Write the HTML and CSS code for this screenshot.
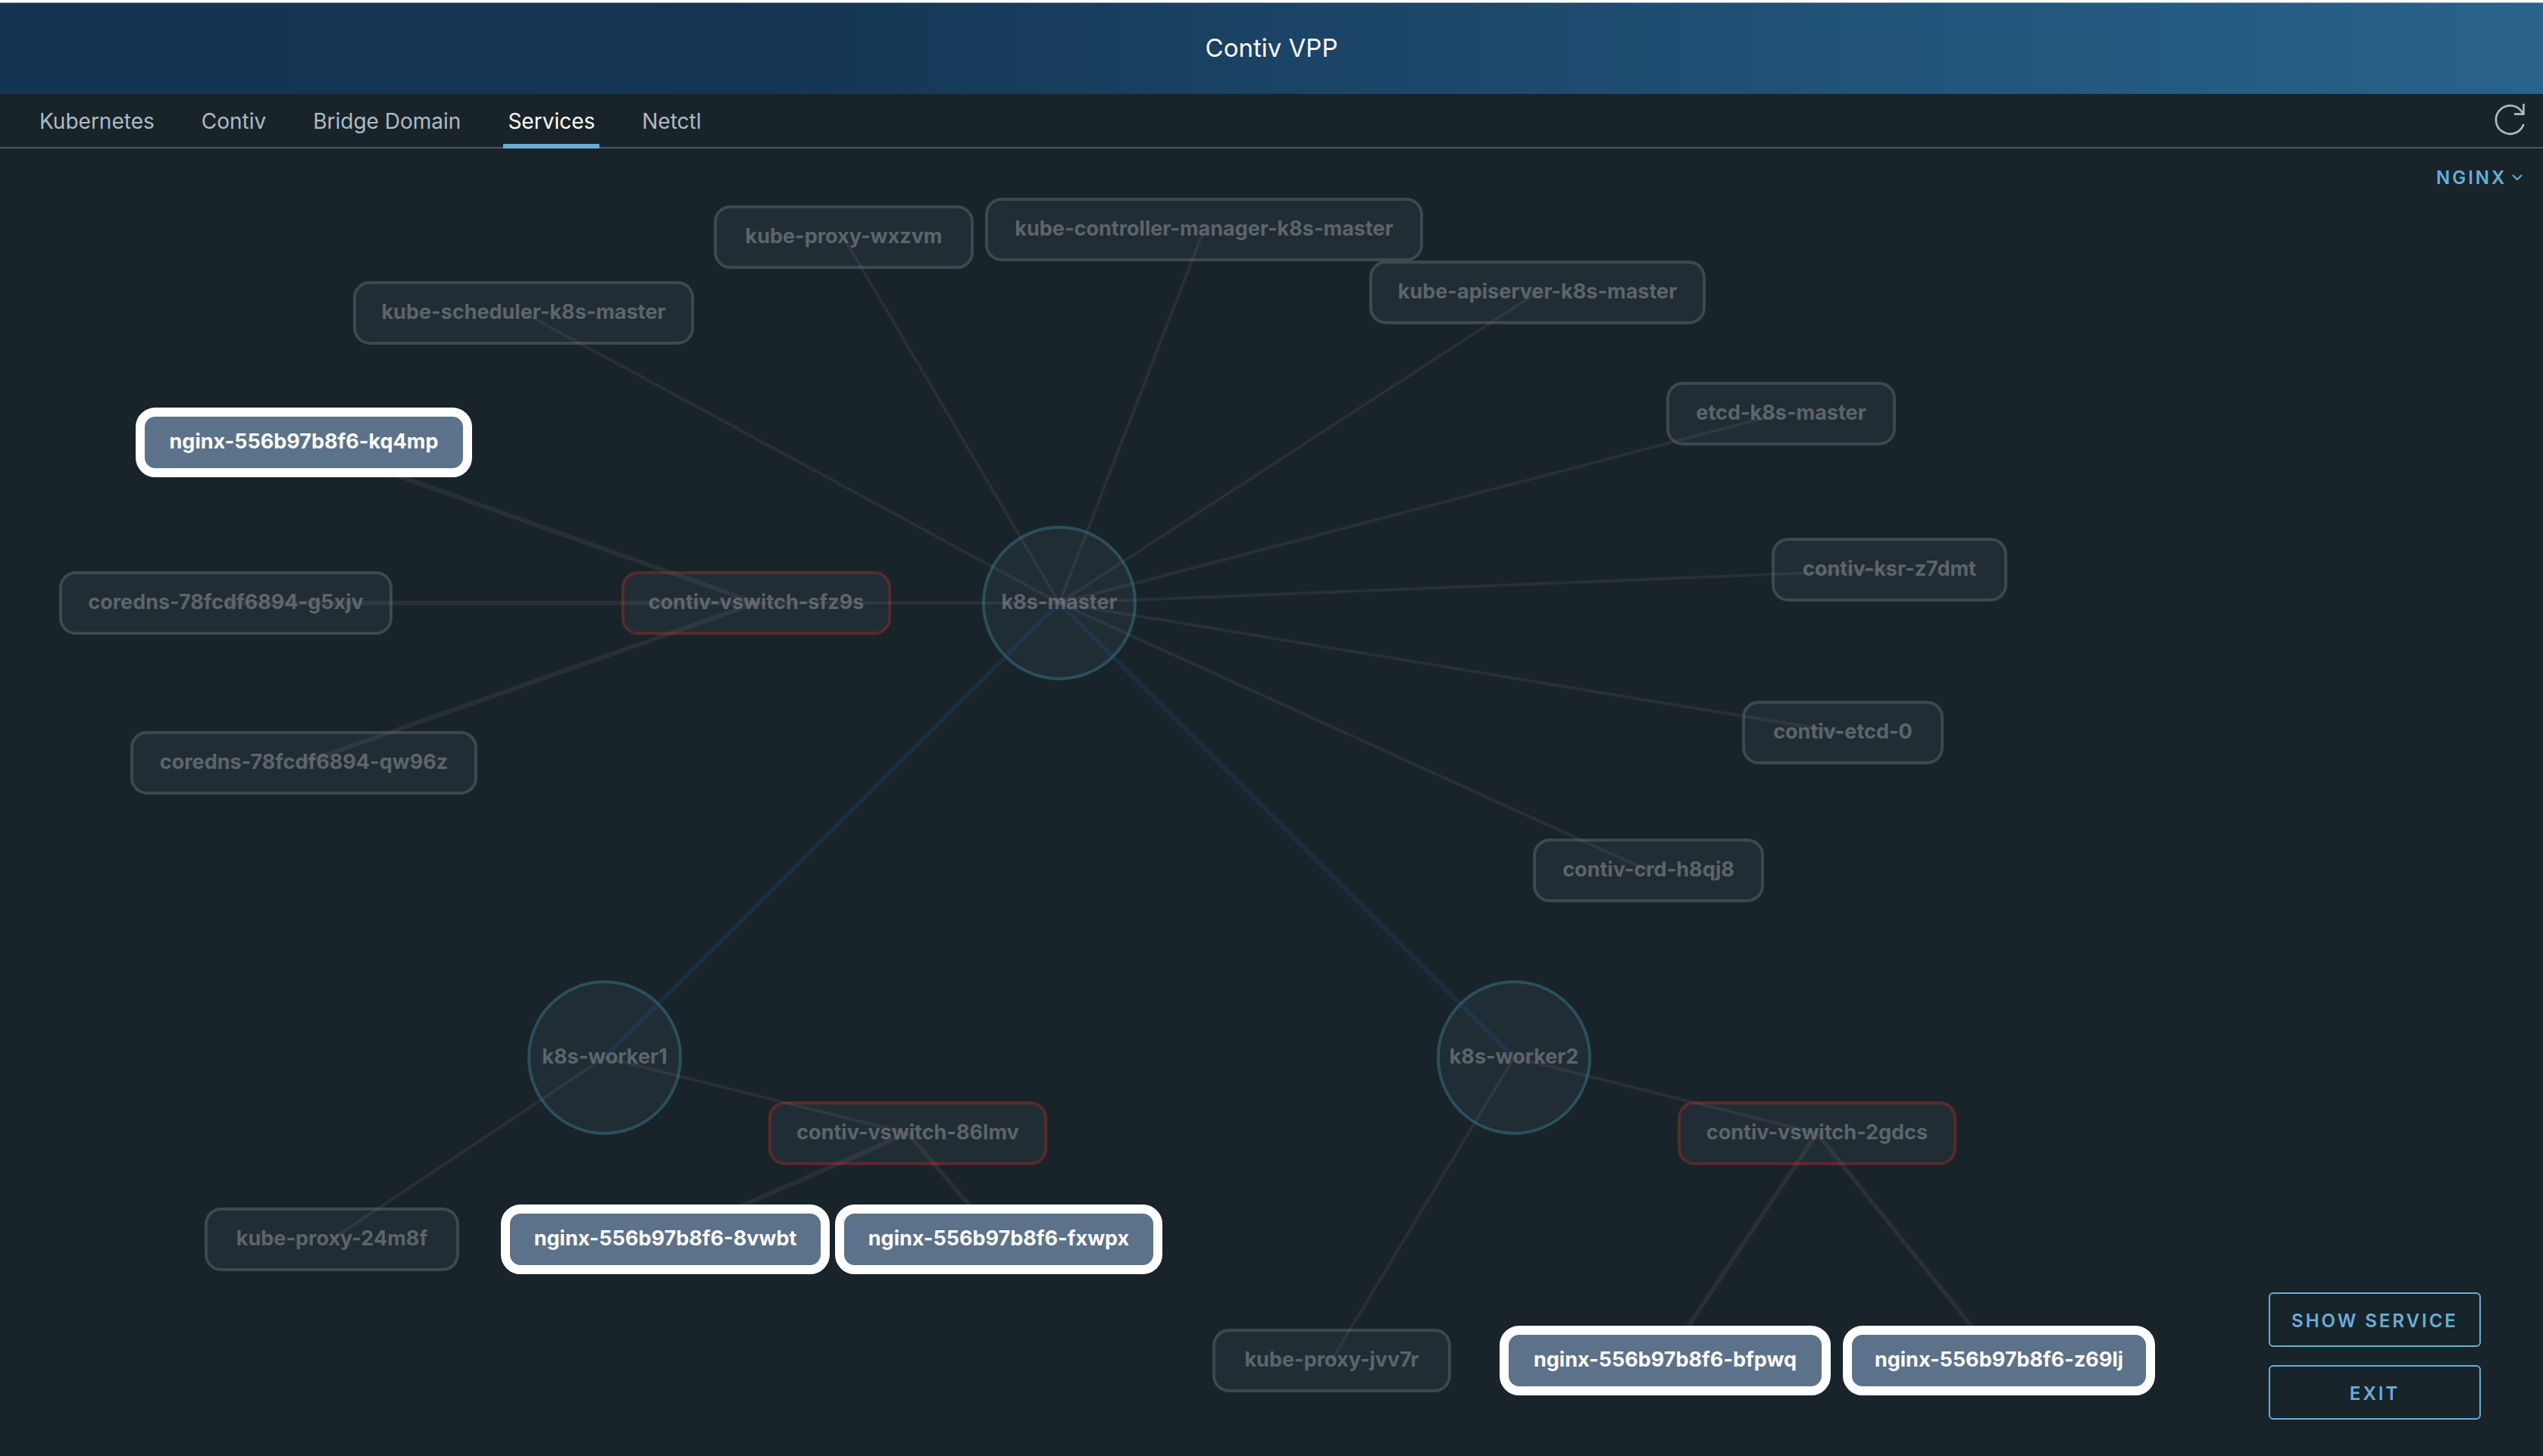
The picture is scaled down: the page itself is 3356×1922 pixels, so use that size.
FILE: index.html
```html
<!DOCTYPE html>
<html lang="en">
<head>
<meta charset="utf-8">
<title>Contiv VPP</title>
<link rel="stylesheet" href="styles.css">
</head>
<body>
<header class="app-header">
  <h1 class="app-title">Contiv VPP</h1>
</header>
<nav class="tabs">
  <a class="tab" href="#kubernetes">Kubernetes</a>
  <a class="tab" href="#contiv">Contiv</a>
  <a class="tab" href="#bridge-domain">Bridge Domain</a>
  <a class="tab active" href="#services" aria-current="page">Services</a>
  <a class="tab" href="#netctl">Netctl</a>
  <button class="refresh" type="button" aria-label="Refresh">
    <svg width="44" height="44" viewBox="0 0 44 44" fill="none" stroke="currentColor">
      <path d="M39.5 14A18.7 18.7 0 1 0 40 29" stroke-width="2.7" stroke-linecap="round"/>
      <path d="M40.4 1V14.6H28" stroke-width="2.6"/>
    </svg>
  </button>
</nav>
<main class="topology">
  <div class="node" style="left:942px;top:75px;width:343px">kube-proxy-wxzvm</div>
  <div class="node" style="left:1300px;top:65px;width:578px">kube-controller-manager-k8s-master</div>
  <div class="node" style="left:1807px;top:148px;width:444px">kube-apiserver-k8s-master</div>
  <div class="node" style="left:466px;top:175px;width:450px">kube-scheduler-k8s-master</div>
  <div class="node" style="left:2199px;top:308px;width:303px">etcd-k8s-master</div>
  <div class="node" style="left:2338px;top:514px;width:311px">contiv-ksr-z7dmt</div>
  <div class="node" style="left:2299px;top:729px;width:266px">contiv-etcd-0</div>
  <div class="node" style="left:2023px;top:911px;width:305px">contiv-crd-h8qj8</div>
  <div class="node" style="left:78px;top:558px;width:440px">coredns-78fcdf6894-g5xjv</div>
  <div class="node" style="left:172px;top:769px;width:458px">coredns-78fcdf6894-qw96z</div>
  <div class="node" style="left:270px;top:1398px;width:336px">kube-proxy-24m8f</div>
  <div class="node" style="left:1600px;top:1558px;width:315px">kube-proxy-jvv7r</div>
  <div class="node vswitch" style="left:820px;top:558px;width:356px">contiv-vswitch-sfz9s</div>
  <div class="node vswitch" style="left:1014px;top:1258px;width:368px">contiv-vswitch-86lmv</div>
  <div class="node vswitch" style="left:2214px;top:1258px;width:368px">contiv-vswitch-2gdcs</div>
  <div class="node host" style="left:1296px;top:498px">k8s-master</div>
  <div class="node host" style="left:696px;top:1098px">k8s-worker1</div>
  <div class="node host" style="left:1896px;top:1098px">k8s-worker2</div>

  <svg class="links" aria-hidden="true">
    <g class="link-host">
      <path d="M1398 600L798 1200"/>
      <path d="M1398 600L1998 1200"/>
    </g>
    <g class="link-system">
      <path d="M1398 600L691 217"/>
      <path d="M1398 600L1113 117"/>
      <path d="M1398 600L1589 107"/>
      <path d="M1398 600L2029 190"/>
      <path d="M1398 600L2350 350"/>
      <path d="M1398 600L2493 556"/>
      <path d="M1398 600L2432 771"/>
      <path d="M1398 600L2175 953"/>
      <path d="M1398 600H998"/>
      <path d="M798 1200L1198 1300"/>
      <path d="M798 1200L438 1440"/>
      <path d="M1998 1200L2398 1300"/>
      <path d="M1998 1200L1757 1600"/>
    </g>
    <g class="link-pod">
      <path d="M998 600L401 388"/>
      <path d="M998 600H298"/>
      <path d="M998 600L401 811"/>
      <path d="M1198 1300L878 1440"/>
      <path d="M1198 1300L1318 1440"/>
      <path d="M2398 1300L2198 1600"/>
      <path d="M2398 1300L2638 1600"/>
    </g>
  </svg>

  <div class="node selected" style="left:179px;top:342px;width:444px">nginx-556b97b8f6-kq4mp</div>
  <div class="node selected" style="left:661px;top:1394px;width:434px">nginx-556b97b8f6-8vwbt</div>
  <div class="node selected" style="left:1102px;top:1394px;width:432px">nginx-556b97b8f6-fxwpx</div>
  <div class="node selected" style="left:1979px;top:1554px;width:437px">nginx-556b97b8f6-bfpwq</div>
  <div class="node selected" style="left:2432px;top:1554px;width:412px">nginx-556b97b8f6-z69lj</div>

  <div class="service-picker">
    <select class="service-select" aria-label="Service">
      <option>NGINX</option>
    </select>
    <svg width="14" height="8" viewBox="0 0 14 8" fill="none" stroke="currentColor" stroke-width="2" aria-hidden="true">
      <path d="M1 1L7 7L13 1"/>
    </svg>
  </div>
  <div class="actions">
    <button class="action" type="button">SHOW SERVICE</button>
    <button class="action" type="button">EXIT</button>
  </div>
</main>
</body>
</html>
```
FILE: styles.css
```css
* {
  box-sizing: border-box;
}

body {
  margin: 0;
  min-height: 100vh;
  display: flex;
  flex-direction: column;
  background: #19242a;
  color: #fff;
  font-family: Inter, sans-serif;
  font-size: 28px;
}

.app-header {
  height: 124px;
  padding-bottom: 2px;
  display: flex;
  align-items: center;
  justify-content: center;
  border-top: 3px solid #fff;
  box-shadow: inset 0 1px #a3abb3;
  background: linear-gradient(90deg, #143452 0%, #143553 30%, #1b4466 52%, #245b82 86%, #29628b 100%);
}

.app-title {
  margin: 0;
  font-size: 33px;
  font-weight: 400;
  line-height: 40px;
}

.tabs {
  height: 72px;
  display: flex;
  gap: 50px;
  padding: 0 22px 0 46px;
  border-bottom: 2px solid #4a565f;
}

.tab {
  height: 72px;
  padding: 0 6px;
  line-height: 72px;
  color: #adbbc4;
  text-decoration: none;
}

.tab.active {
  color: #fff;
  box-shadow: inset 0 -6px #68aed6;
}

.refresh {
  margin-left: auto;
  padding: 12px 0 0;
  border: 0;
  background: none;
  color: #adbbc4;
  display: flex;
}

.topology {
  position: relative;
  flex: 1;
  min-height: 1720px;
}

.links {
  position: absolute;
  inset: 0;
  width: 100%;
  height: 100%;
  pointer-events: none;
}

.link-host {
  stroke: rgba(26, 100, 160, .18);
  stroke-width: 6px;
}

.link-system {
  stroke: rgba(159, 128, 150, .12);
  stroke-width: 4px;
}

.link-pod {
  stroke: rgba(159, 128, 150, .12);
  stroke-width: 6px;
}

/* Graph nodes sit at their coordinates on the canvas. */
.node {
  position: absolute;
  height: 84px;
  padding-bottom: 4px;
  display: flex;
  align-items: center;
  justify-content: center;
  border: 4px solid #3d484f;
  border-radius: 22px;
  background: #212d35;
  color: #5d6568;
  font-size: 27px;
  font-weight: 700;
  white-space: nowrap;
}

.node.vswitch {
  border-color: #5a2a2a;
}

.node.host {
  width: 204px;
  height: 204px;
  border-color: #2a4f5d;
  border-radius: 50%;
}

.node.selected {
  height: 92px;
  border: 12px solid #fff;
  border-radius: 26px;
  background: #5b728a;
  color: #fff;
}

.service-picker {
  position: absolute;
  top: 22px;
  right: 27px;
  display: flex;
  align-items: center;
  gap: 6px;
  color: #68aed6;
}

.service-select {
  height: 32px;
  padding: 0;
  border: 0;
  appearance: none;
  background: none;
  color: inherit;
  font: 600 24px Inter, sans-serif;
  letter-spacing: 3px;
}

.actions {
  position: absolute;
  right: 82px;
  bottom: 48px;
  width: 280px;
  display: grid;
  gap: 24px;
}

.action {
  height: 72px;
  padding: 2px 0 0;
  border: 2px solid #68aed6;
  border-radius: 6px;
  background: none;
  color: #68aed6;
  font: 600 24px Inter, sans-serif;
  letter-spacing: 3px;
}
```
